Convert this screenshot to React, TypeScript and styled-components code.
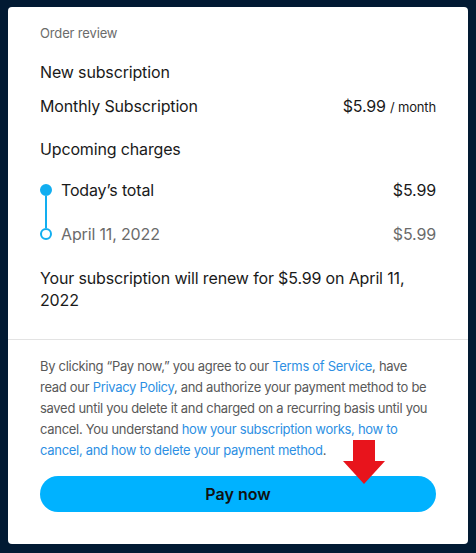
import styled, { createGlobalStyle } from "styled-components";

const GlobalStyle = createGlobalStyle`
  html, body {
    margin: 0;
    padding: 0;
    background: #021a33;
  }
  body {
    font-family: Inter, "Noto Sans", "Liberation Sans", sans-serif;
    color: #1a1a1a;
  }
  * {
    box-sizing: border-box;
  }
`;

const Page = styled.div`
  padding: 7px 8px 9px 8px;
`;

const Card = styled.div`
  width: 460px;
  height: 537px;
  background: #ffffff;
  border-radius: 4px;
  display: flex;
  flex-direction: column;
  overflow: hidden;
`;

const Summary = styled.section`
  padding: 16px 32px 28px 32px;
  border-bottom: 1px solid #e3e3e3;
  display: flex;
  flex-direction: column;
  letter-spacing: -0.15px;
`;

const Eyebrow = styled.div`
  font-size: 13px;
  line-height: 20px;
  color: #6b6b6b;
`;

const Heading = styled.div<{ $gap: number }>`
  margin-top: ${({ $gap }) => $gap}px;
  font-size: 16px;
  line-height: 24px;
`;

const LineItem = styled.div`
  margin-top: 10px;
  display: flex;
  justify-content: space-between;
  align-items: baseline;
  font-size: 16px;
  line-height: 24px;
`;

const Price = styled.span`
  font-size: 16px;
`;

const Period = styled.span`
  font-size: 13px;
  margin-left: 4px;
`;

const Timeline = styled.div`
  margin-top: 17px;
  display: grid;
  grid-template-columns: 21px 1fr auto;
  grid-template-rows: 24px 24px;
  row-gap: 20px;
  font-size: 16px;
  line-height: 24px;
`;

const Rail = styled.div`
  grid-column: 1;
  grid-row: 1 / 3;
  display: flex;
  flex-direction: column;
  align-items: center;
  width: 12px;
  padding: 6px 0 6px 0;
`;

const Dot = styled.div<{ $hollow?: boolean }>`
  width: 12px;
  height: 12px;
  flex: none;
  border-radius: 50%;
  background: ${({ $hollow }) => ($hollow ? "#ffffff" : "#12aef0")};
  border: 2px solid #12aef0;
`;

const Connector = styled.div`
  flex: 1;
  width: 2px;
  background: #12aef0;
`;

const StepLabel = styled.div<{ $muted?: boolean }>`
  grid-column: 2;
  color: ${({ $muted }) => ($muted ? "#6b6b6b" : "#1a1a1a")};
`;

const StepAmount = styled.div<{ $muted?: boolean }>`
  grid-column: 3;
  text-align: right;
  color: ${({ $muted }) => ($muted ? "#6b6b6b" : "#1a1a1a")};
`;

const Renewal = styled.p`
  margin: 21px 0 0 0;
  font-size: 16px;
  line-height: 22px;
`;

const Footer = styled.section`
  padding: 16px 32px 0 32px;
  display: flex;
  flex-direction: column;
`;

const Legal = styled.p`
  margin: 0;
  font-size: 13px;
  line-height: 21px;
  letter-spacing: -0.3px;
  color: #595959;
`;

const Link = styled.a`
  color: #2d8fe3;
  text-decoration: none;
`;

const ButtonWrap = styled.div`
  position: relative;
  margin-top: 15px;
`;

const PayButton = styled.button`
  width: 100%;
  height: 36px;
  border: none;
  border-radius: 18px;
  background: #00b2ff;
  color: #111111;
  font-family: inherit;
  font-size: 16px;
  font-weight: 600;
  cursor: pointer;
`;

const Pointer = styled.svg`
  position: absolute;
  left: 303px;
  top: -36px;
  pointer-events: none;
`;

export default function App() {
  return (
    <>
      <GlobalStyle />
      <Page>
        <Card>
          <Summary>
            <Eyebrow>Order review</Eyebrow>
            <Heading $gap={17}>New subscription</Heading>
            <LineItem>
              <span>Monthly Subscription</span>
              <span>
                <Price>$5.99</Price>
                <Period>/ month</Period>
              </span>
            </LineItem>
            <Heading $gap={18}>Upcoming charges</Heading>
            <Timeline>
              <Rail>
                <Dot />
                <Connector />
                <Dot $hollow />
              </Rail>
              <StepLabel>Today’s total</StepLabel>
              <StepAmount>$5.99</StepAmount>
              <StepLabel $muted>April 11, 2022</StepLabel>
              <StepAmount $muted>$5.99</StepAmount>
            </Timeline>
            <Renewal>Your subscription will renew for $5.99 on April 11, 2022</Renewal>
          </Summary>
          <Footer>
            <Legal>
              By clicking “Pay now,” you agree to our <Link href="#">Terms of Service</Link>, have
              read our <Link href="#">Privacy Policy</Link>, and authorize your payment method to be
              saved until you delete it and charged on a recurring basis until you cancel. You
              understand <Link href="#">how your subscription works, how to cancel, and how to
              delete your payment method</Link>.
            </Legal>
            <ButtonWrap>
              <PayButton>Pay now</PayButton>
              <Pointer width="42" height="44" viewBox="0 0 42 44">
                <polygon points="10,0 32,0 32,21 42,21 21,44 0,21 10,21" fill="#e8141c" />
              </Pointer>
            </ButtonWrap>
          </Footer>
        </Card>
      </Page>
    </>
  );
}
